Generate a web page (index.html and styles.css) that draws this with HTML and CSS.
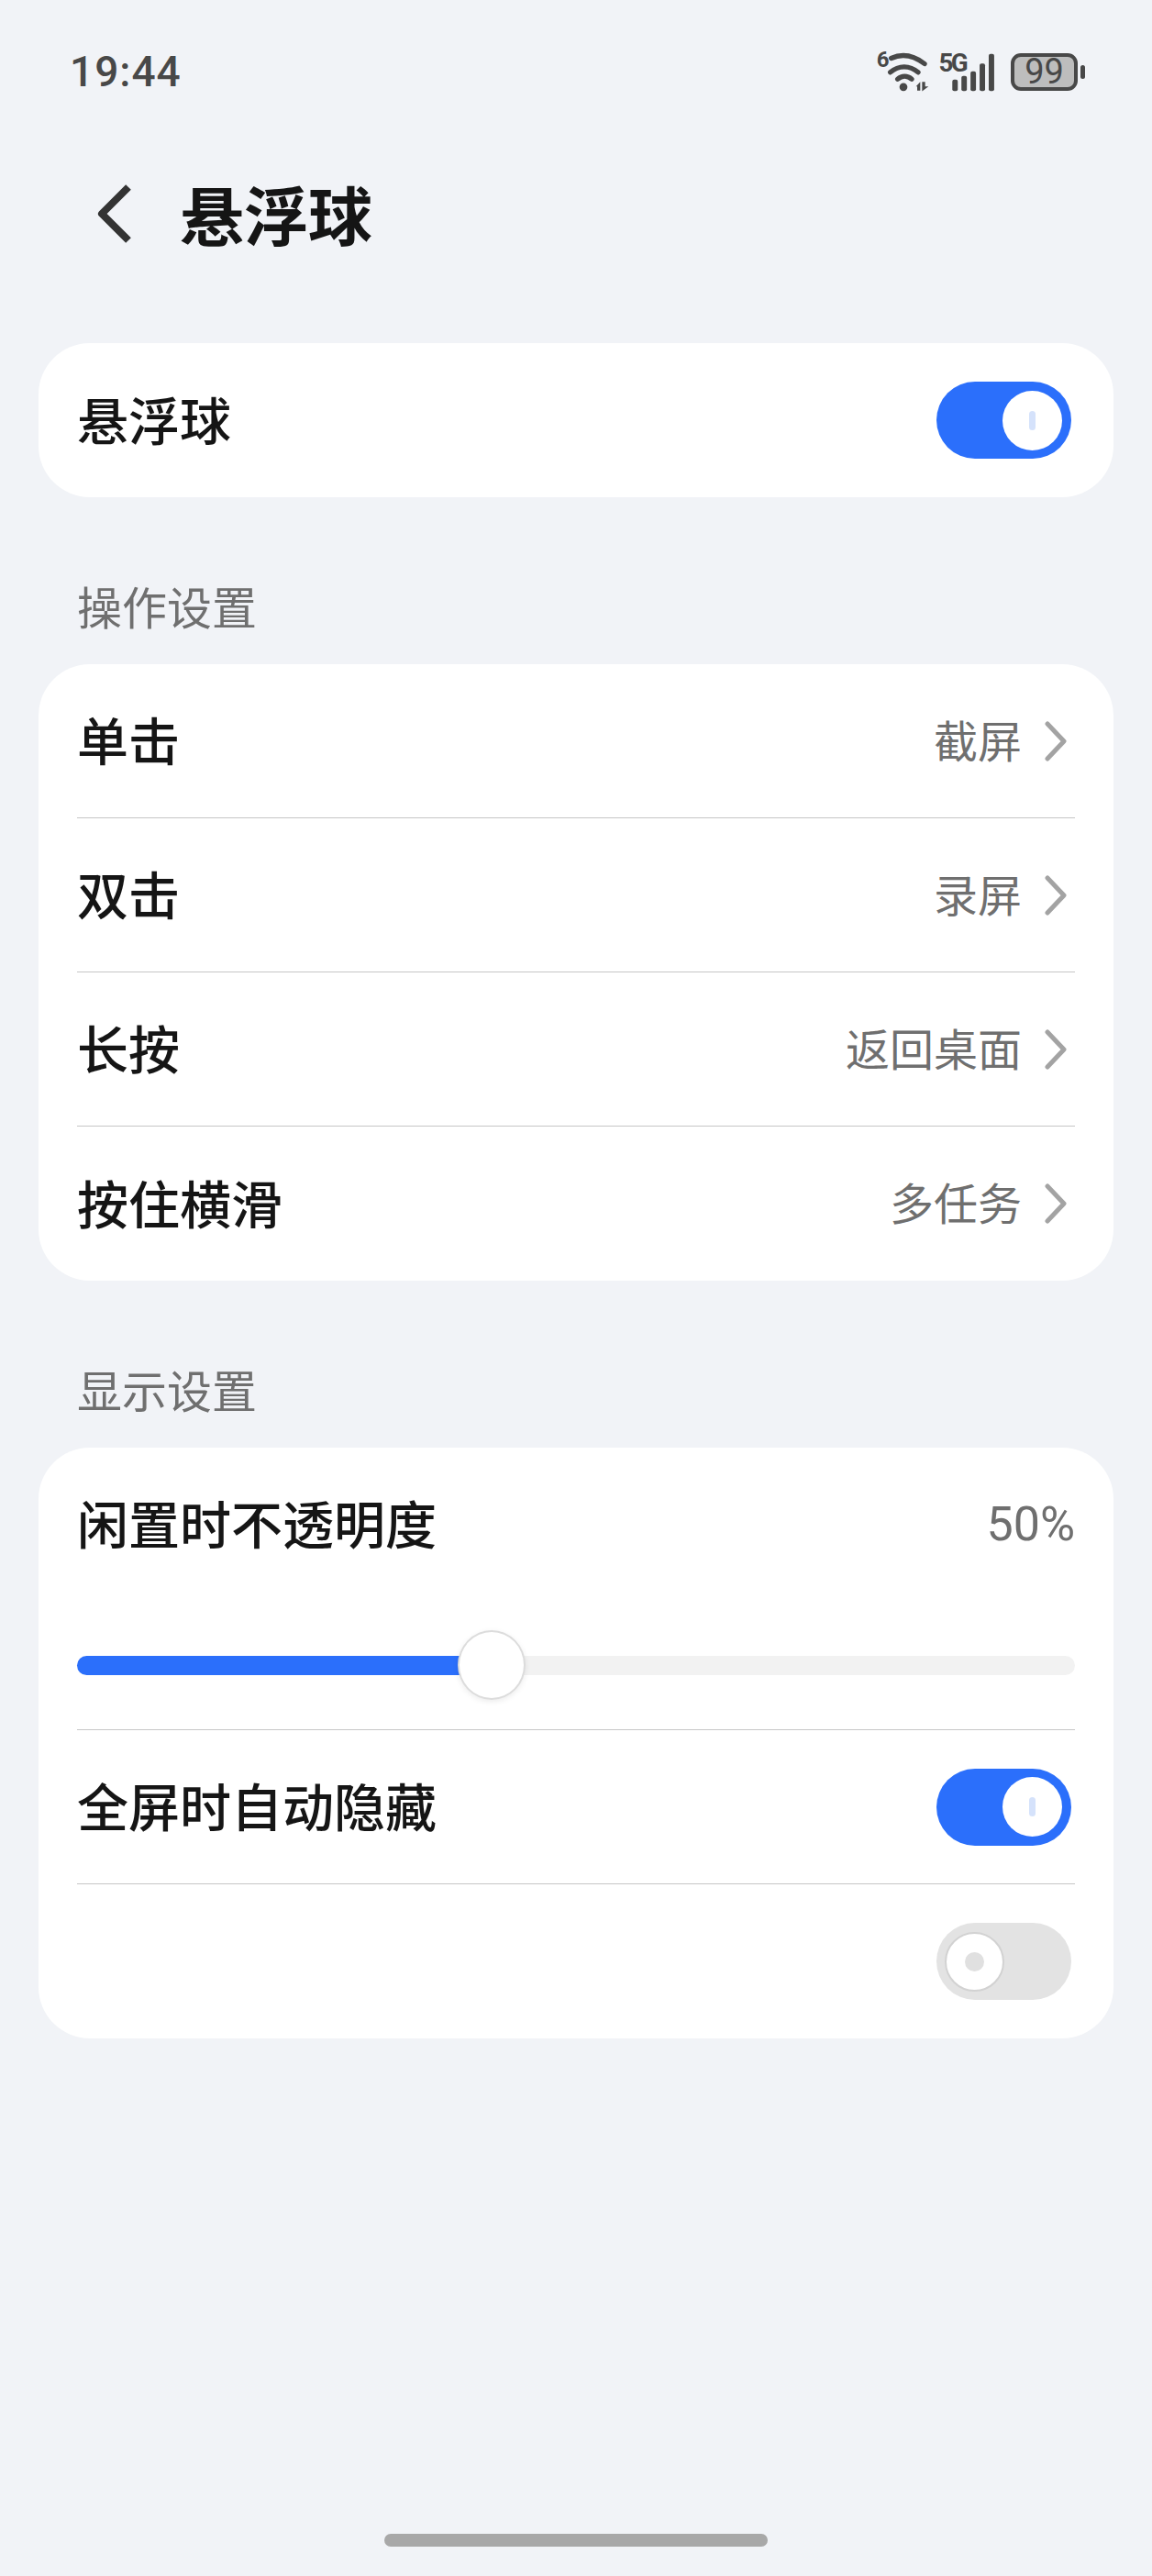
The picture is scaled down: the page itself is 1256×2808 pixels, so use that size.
FILE: index.html
```html
<!DOCTYPE html>
<html lang="zh-CN">
<head>
  <meta charset="UTF-8">
  <meta name="viewport" content="width=device-width, initial-scale=1.0">
  <title>悬浮球</title>
  <link rel="stylesheet" href="styles.css">
</head>
<body>
  <div class="phone">
    <header class="status-bar">
      <span class="time">19:44</span>
      <div class="status-icons">
        <svg class="icon-wifi" width="60" height="47" viewBox="105 75 180 140">
          <text class="wifi-text" x="107" y="130">6</text>
          <path d="M155 100C190 84 225 88 264 118" class="wave"/>
          <path d="M152 146C180 122 215 122 243 146" class="wave"/>
          <path d="M176 168C190 156 208 156 222 168" class="wave"/>
          <circle cx="195" cy="194" r="13" class="solid"/>
          <path d="M236 192l14-15v29h-10v-14zM256 177h10v15h11l-21 16z" class="solid"/>
        </svg>
        <svg class="icon-signal" width="62" height="43" viewBox="310 80 185 130">
          <text class="g-text" x="310" y="144">5G</text>
          <rect x="355" y="170" width="18" height="38" rx="6" class="solid"/>
          <rect x="385" y="158" width="18" height="50" rx="6" class="solid"/>
          <rect x="415" y="143" width="18" height="65" rx="6" class="solid"/>
          <rect x="445" y="117" width="18" height="91" rx="6" class="solid"/>
          <rect x="475" y="85" width="18" height="123" rx="6" class="solid"/>
        </svg>
        <div class="battery">
          <span class="battery-body">99</span>
          <span class="battery-cap"></span>
        </div>
      </div>
    </header>

    <div class="title-bar">
      <svg class="back" width="40" height="66" viewBox="0 0 40 66">
        <path d="M36 4L7 33l29 29"/>
      </svg>
      <h1>悬浮球</h1>
    </div>

    <section class="card">
      <div class="row">
        <span class="label">悬浮球</span>
        <span class="switch on"><span class="knob"></span></span>
      </div>
    </section>

    <h2 class="section-title">操作设置</h2>
    <section class="card">
      <div class="row">
        <span class="label">单击</span>
        <span class="value">截屏</span>
        <svg class="chevron" width="26" height="44" viewBox="0 0 26 44"><path d="M4 3l18 19L4 41"/></svg>
      </div>
      <div class="row">
        <span class="label">双击</span>
        <span class="value">录屏</span>
        <svg class="chevron" width="26" height="44" viewBox="0 0 26 44"><path d="M4 3l18 19L4 41"/></svg>
      </div>
      <div class="row">
        <span class="label">长按</span>
        <span class="value">返回桌面</span>
        <svg class="chevron" width="26" height="44" viewBox="0 0 26 44"><path d="M4 3l18 19L4 41"/></svg>
      </div>
      <div class="row">
        <span class="label">按住横滑</span>
        <span class="value">多任务</span>
        <svg class="chevron" width="26" height="44" viewBox="0 0 26 44"><path d="M4 3l18 19L4 41"/></svg>
      </div>
    </section>

    <h2 class="section-title">显示设置</h2>
    <section class="card">
      <div class="slider-row">
        <div class="slider-head">
          <span class="label">闲置时不透明度</span>
          <span class="value percent">50%</span>
        </div>
        <div class="slider">
          <div class="slider-fill"></div>
          <div class="slider-knob"></div>
        </div>
      </div>
      <div class="row">
        <span class="label">全屏时自动隐藏</span>
        <span class="switch on"><span class="knob"></span></span>
      </div>
      <div class="row">
        <span class="label"></span>
        <span class="switch"><span class="knob"></span></span>
      </div>
    </section>

    <div class="home-bar"></div>
  </div>
</body>
</html>
```

FILE: styles.css
```css
:root {
  --bg: #f1f3f7;
  --blue: #2b6ffb;
  --text: #151515;
  --muted: #6f6f6f;
  --line: #c6c6c6;
  --dark: #484848;
}

* {
  margin: 0;
  padding: 0;
  box-sizing: border-box;
}

body {
  background: var(--bg);
  color: var(--text);
  font-family: "Noto Sans CJK SC", "Noto Sans", sans-serif;
}

.phone {
  width: 1256px;
  height: 2808px;
  padding: 0 42px;
  position: relative;
  overflow: hidden;
}

.status-bar {
  height: 156px;
  padding: 0 31px 0 34px;
  display: flex;
  justify-content: space-between;
  align-items: center;
}

.time {
  font-family: Roboto, sans-serif;
  font-size: 46px;
  font-weight: 500;
  letter-spacing: 1px;
  color: var(--dark);
}

.status-icons {
  display: flex;
  align-items: center;
  gap: 8px;
}

.status-icons svg {
  overflow: visible;
}

.wifi-text,
.g-text {
  font-family: Roboto, sans-serif;
  font-weight: 700;
  fill: var(--dark);
}

.wifi-text {
  font-size: 72px;
}

.g-text {
  font-size: 84px;
  letter-spacing: -8px;
}

.wave {
  fill: none;
  stroke: var(--dark);
  stroke-width: 16;
  stroke-linecap: round;
}

.solid {
  fill: var(--dark);
}

.battery {
  display: flex;
  align-items: center;
  gap: 3px;
  margin-left: 9px;
}

.battery-body {
  width: 73px;
  height: 41px;
  border: 4px solid var(--dark);
  border-radius: 11px;
  background: #bdbdbd;
  color: var(--dark);
  font-family: Roboto, sans-serif;
  font-size: 38px;
  line-height: 33px;
  text-align: center;
}

.battery-cap {
  width: 5px;
  height: 15px;
  border-radius: 3px;
  background: var(--dark);
}

.title-bar {
  height: 78px;
  margin-top: 38px;
  display: flex;
  align-items: center;
  padding-left: 62px;
  gap: 52px;
}

.back path {
  fill: none;
  stroke: #333;
  stroke-width: 8;
  stroke-linejoin: round;
}

h1 {
  font-size: 70px;
  font-weight: 700;
  line-height: 78px;
}

.card {
  background: #fff;
  border-radius: 56px;
  padding: 0 42px;
}

.title-bar + .card {
  margin-top: 102px;
}

.row {
  height: 168px;
  display: flex;
  align-items: center;
  border-bottom: 1px solid var(--line);
}

.row:last-child {
  border-bottom: none;
}

.label {
  flex: 1;
  font-size: 56px;
  font-weight: 500;
  margin-bottom: 6px;
}

.value {
  font-size: 48px;
  color: var(--muted);
  margin: 0 24px 6px 0;
}

.chevron {
  margin-right: 8px;
}

.chevron path {
  fill: none;
  stroke: #a3a3a3;
  stroke-width: 5;
  stroke-linecap: round;
  stroke-linejoin: round;
}

.section-title {
  font-size: 49px;
  font-weight: 400;
  color: var(--muted);
  line-height: 60px;
  padding: 88px 0 0 42px;
  height: 182px;
}

.switch {
  width: 147px;
  height: 84px;
  margin-right: 4px;
  border-radius: 42px;
  background: #e3e3e3;
  display: flex;
  align-items: center;
  padding-left: 9px;
}

.switch.on {
  background: var(--blue);
  justify-content: flex-end;
  padding: 0 10px 0 0;
}

.knob {
  width: 65px;
  height: 65px;
  border-radius: 50%;
  background: #fff;
  border: 2px solid #d2d2d2;
  display: flex;
  align-items: center;
  justify-content: center;
}

.knob::after {
  content: "";
  width: 21px;
  height: 21px;
  border-radius: 50%;
  background: #e0e0e0;
}

.on .knob {
  border: none;
}

.on .knob::after {
  width: 7px;
  height: 21px;
  border-radius: 4px;
  background: #d5e2fb;
}

.slider-row {
  height: 308px;
  padding-top: 48px;
  border-bottom: 1px solid var(--line);
}

.slider-head {
  display: flex;
  align-items: center;
  height: 70px;
}

.percent {
  margin: 0;
  font-size: 52px;
  font-family: Roboto, sans-serif;
}

.slider {
  position: relative;
  height: 21px;
  margin-top: 109px;
  border-radius: 11px;
  background: #f2f2f2;
}

.slider-fill {
  width: 39%;
  height: 100%;
  border-radius: 11px 0 0 11px;
  background: var(--blue);
}

.slider-knob {
  position: absolute;
  left: 415px;
  top: -28px;
  width: 74px;
  height: 76px;
  border-radius: 50%;
  background: #fff;
  border: 2px solid #dcdcdc;
  box-shadow: 0 2px 6px rgba(0, 0, 0, 0.08);
}

.home-bar {
  position: absolute;
  left: 419px;
  top: 2762px;
  width: 418px;
  height: 14px;
  border-radius: 7px;
  background: #a8a8a8;
}
```
